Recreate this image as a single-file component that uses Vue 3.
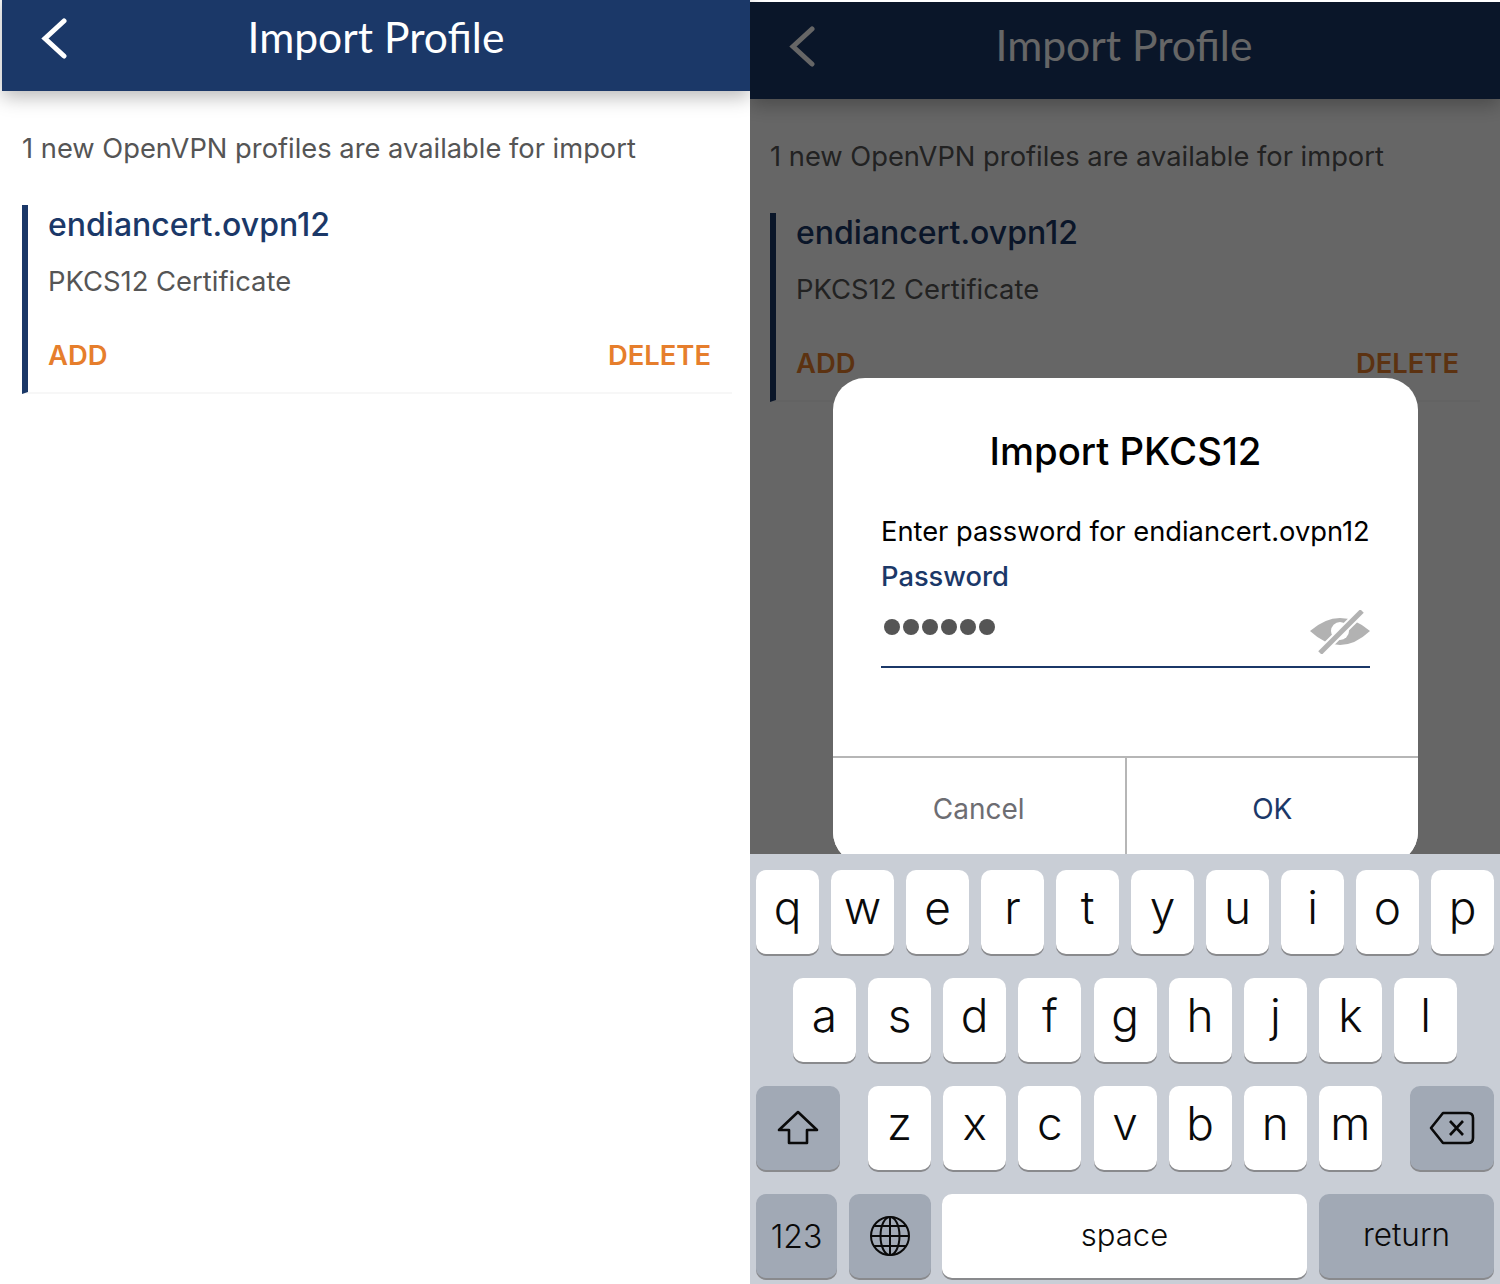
<template>
  <div class="page">
    <section v-for="panel in panels" :key="panel" class="panel" :class="panel">
      <header class="app-header">
        <button class="back-btn" aria-label="Back">
          <svg width="28" height="42" viewBox="0 0 28 42" fill="none">
            <path d="M24 3 L5 20.5 L24 38" stroke="currentColor" stroke-width="5" stroke-linecap="round" stroke-linejoin="miter" />
          </svg>
        </button>
        <h1>Import Profile</h1>
      </header>

      <p class="intro">1 new OpenVPN profiles are available for import</p>

      <div class="profile-card">
        <h2>endiancert.ovpn12</h2>
        <p class="profile-type">PKCS12 Certificate</p>
        <div class="profile-actions">
          <span>ADD</span>
          <span>DELETE</span>
        </div>
      </div>

      <template v-if="panel === 'dimmed'">
        <div class="overlay">
          <div class="dialog">
            <div class="dialog-body">
              <h3>Import PKCS12</h3>
              <p class="dialog-msg">Enter password for endiancert.ovpn12</p>
              <label class="field-label">Password</label>
              <div class="field">
                <div class="dots">
                  <i v-for="n in 6" :key="n"></i>
                </div>
                <svg class="eye" width="60" height="44" viewBox="0 0 60 44">
                  <path d="M0 21 Q15 8 30 8 Q45 8 60 21 Q45 35 30 35 Q15 35 0 21Z" fill="#b2b2b2" />
                  <circle cx="30" cy="21" r="9" fill="#fff" />
                  <path d="M53 0 L11 42" stroke="#fff" stroke-width="9" />
                  <path d="M52 1 L10 43" stroke="#b2b2b2" stroke-width="5" />
                </svg>
              </div>
            </div>
            <div class="dialog-actions">
              <button class="cancel">Cancel</button>
              <button class="ok">OK</button>
            </div>
          </div>
        </div>

        <div class="keyboard">
          <div v-for="(row, i) in letterRows" :key="i" class="kb-row" :class="'row-' + i">
            <div v-if="i === 2" class="key fn wide-fn">
              <svg width="42" height="36" viewBox="0 0 42 36" fill="none">
                <path d="M21 2 L2 20 H12 V33 H30 V20 H40 Z" stroke="#0a0a0a" stroke-width="2.6" stroke-linejoin="round" />
              </svg>
            </div>
            <div class="letters">
              <div v-for="k in row" :key="k" class="key letter">{{ k }}</div>
            </div>
            <div v-if="i === 2" class="key fn wide-fn">
              <svg width="46" height="34" viewBox="0 0 46 34" fill="none">
                <path d="M14 2 H39 Q44 2 44 7 V27 Q44 32 39 32 H14 L2 17 Z" stroke="#0a0a0a" stroke-width="2.6" stroke-linejoin="round" />
                <path d="M21 10 L34 24 M34 10 L21 24" stroke="#0a0a0a" stroke-width="2.6" />
              </svg>
            </div>
          </div>
          <div class="kb-row bottom-row">
            <div class="key fn num">123</div>
            <div class="key fn globe">
              <svg width="42" height="42" viewBox="0 0 42 42" fill="none" stroke="#0a0a0a" stroke-width="2">
                <circle cx="21" cy="21" r="19" />
                <ellipse cx="21" cy="21" rx="9.5" ry="19" />
                <path d="M21 2 V40 M2 21 H40 M5 11 H37 M5 31 H37" />
              </svg>
            </div>
            <div class="key space">space</div>
            <div class="key fn ret">return</div>
          </div>
        </div>
      </template>
    </section>
  </div>
</template>

<script setup>
const panels = ['plain', 'dimmed']

const letterRows = [
  ['q', 'w', 'e', 'r', 't', 'y', 'u', 'i', 'o', 'p'],
  ['a', 's', 'd', 'f', 'g', 'h', 'j', 'k', 'l'],
  ['z', 'x', 'c', 'v', 'b', 'n', 'm']
]
</script>

<style>
html, body {
  margin: 0;
  background: #fff;
}
</style>

<style scoped>
.page {
  display: flex;
  width: 1500px;
  height: 1284px;
  overflow: hidden;
  padding-left: 2px;
  box-sizing: border-box;
  background: #fff;
  font-family: Inter, "Liberation Sans", sans-serif;
}

.panel {
  position: relative;
  flex: none;
  height: 1290px;
  background: #fff;
}
.panel.plain {
  width: 748px;
  margin-top: -6px;
}
.panel.dimmed {
  width: 750px;
  margin-top: 2px;
  height: 1282px;
  overflow: hidden;
}

.app-header {
  position: relative;
  display: flex;
  align-items: center;
  justify-content: center;
  height: 97px;
  padding-bottom: 12px;
  box-sizing: border-box;
  background: #1b3868;
  color: #fff;
  box-shadow: 0 6px 18px rgba(0, 0, 0, 0.28);
}
.app-header h1 {
  margin: 0;
  font-family: Lato, sans-serif;
  font-size: 42.6px;
  font-weight: 400;
}
.dimmed .app-header h1 {
  margin-right: 2px;
}
.back-btn {
  position: absolute;
  left: 38px;
  top: 24px;
  padding: 0;
  border: none;
  background: none;
  color: inherit;
  line-height: 0;
}

.intro {
  margin: 38px 0 0 20px;
  height: 40px;
  font-size: 27.3px;
  line-height: 40px;
  color: #555;
}

.profile-card {
  width: 710px;
  margin: 36px 0 0 20px;
  height: 189px;
  padding: 0 21px 0 20px;
  box-sizing: border-box;
  border-left: 6px solid #1b3868;
  border-bottom: 2px solid #f7f7f7;
}
.profile-card h2 {
  margin: 0;
  font-size: 32px;
  line-height: 40px;
  font-weight: 500;
  color: #1b3868;
}
.profile-type {
  margin: 16px 0 0;
  font-size: 27.4px;
  line-height: 40px;
  color: #555;
}
.profile-actions {
  display: flex;
  justify-content: space-between;
  margin-top: 34px;
  font-size: 27.4px;
  line-height: 40px;
  font-weight: 600;
  color: #e67e2c;
}

.overlay {
  position: absolute;
  inset: 0;
  background: rgba(0, 0, 0, 0.6);
}
.dialog {
  position: absolute;
  left: 83px;
  top: 376px;
  width: 585px;
  height: 486px;
  display: flex;
  flex-direction: column;
  background: #fff;
  border-radius: 32px;
  overflow: hidden;
}
.dialog-body {
  flex: none;
  height: 378px;
  padding: 48px 48px 0;
  box-sizing: border-box;
}
.dialog-body h3 {
  margin: 0;
  text-align: center;
  font-size: 38.3px;
  line-height: 50px;
  font-weight: 500;
  color: #000;
}
.dialog-msg {
  margin: 36px 0 0;
  font-size: 27.3px;
  line-height: 40px;
  color: #000;
}
.field-label {
  display: block;
  margin-top: 5px;
  font-size: 27.3px;
  line-height: 40px;
  font-weight: 500;
  color: #1b3868;
}
.field {
  display: flex;
  justify-content: space-between;
  align-items: flex-start;
  height: 55px;
  margin-top: 14px;
  border-bottom: 2px solid #1b3868;
}
.dots {
  display: flex;
  gap: 3px;
  padding: 8px 0 0 3px;
}
.dots i {
  width: 16px;
  height: 16px;
  border-radius: 50%;
  background: #555;
}
.eye {
  margin-top: -1px;
}
.dialog-actions {
  flex: 1;
  display: flex;
  border-top: 2px solid #b6b6b6;
}
.dialog-actions button {
  flex: 1;
  height: 100%;
  padding: 0 0 4px;
  border: none;
  background: #fff;
  font-family: inherit;
  font-size: 28px;
}
.cancel {
  color: #6d6d72;
  border-right: 2px solid #b6b6b6 !important;
}
.ok {
  color: #1b3868;
}

.keyboard {
  position: absolute;
  left: 0;
  right: 0;
  bottom: 0;
  height: 430px;
  display: flex;
  flex-direction: column;
  gap: 24px;
  padding: 16px 6px 0;
  box-sizing: border-box;
  background: #c9ced6;
}
.kb-row {
  display: flex;
  justify-content: space-between;
  height: 84px;
}
.row-1 {
  justify-content: center;
}
.row-1 .letters,
.row-2 .letters {
  gap: 12.15px;
}
.letters {
  display: flex;
  gap: 12px;
}
.key {
  display: flex;
  align-items: center;
  justify-content: center;
  box-sizing: border-box;
  height: 84px;
  border-radius: 10px;
  background: #fff;
  box-shadow: 0 2px 0 #898a8d;
  color: #0a0a0a;
}
.key.fn {
  background: #a1a9b5;
}
.letter {
  width: 63px;
  padding-bottom: 10px;
  font-size: 46px;
  font-weight: 300;
}
.wide-fn {
  width: 84px;
}
.bottom-row {
  justify-content: flex-start;
  gap: 12px;
}
.num {
  width: 81px;
  font-size: 32px;
  font-weight: 350;
}
.globe {
  width: 82px;
  margin-right: -1px;
}
.space {
  width: 365px;
  padding-bottom: 3px;
  font-size: 31px;
  font-weight: 350;
}
.ret {
  width: 175px;
  padding-bottom: 3px;
  font-size: 31.5px;
  font-weight: 350;
}
</style>
